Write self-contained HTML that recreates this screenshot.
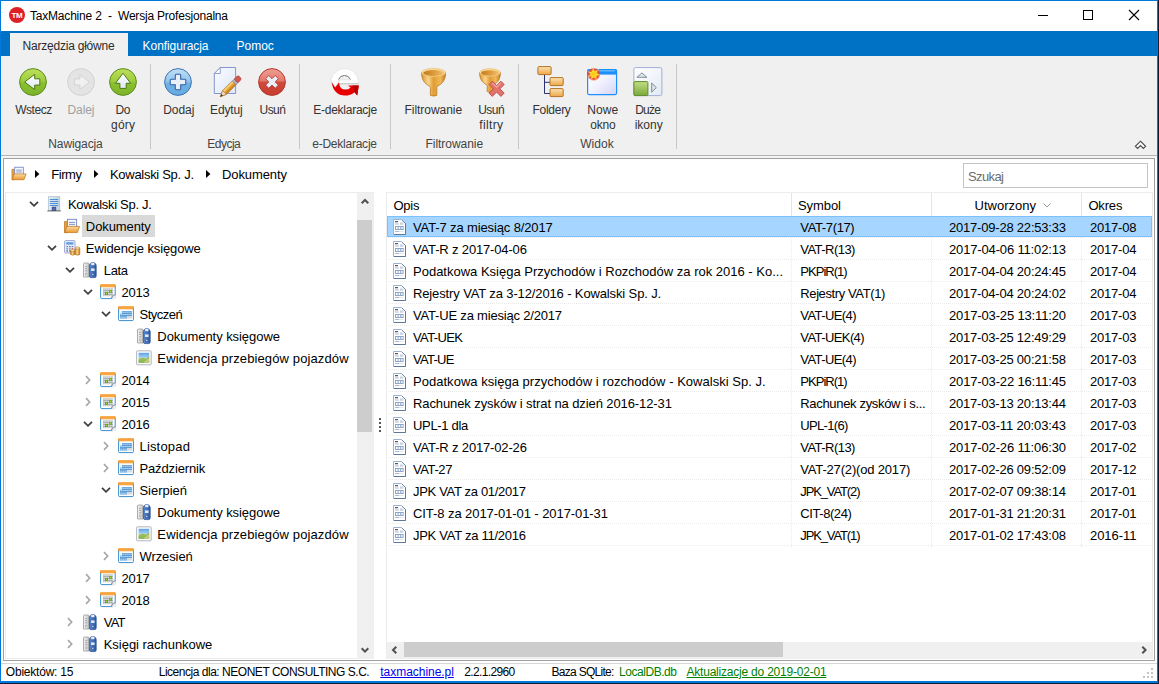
<!DOCTYPE html>
<html lang="pl"><head><meta charset="utf-8"><title>TaxMachine 2 - Wersja Profesjonalna</title>
<style>
html,body{margin:0;padding:0;background:#fff;}
body{width:1159px;height:684px;overflow:hidden;font-family:"Liberation Sans",sans-serif;}
#win{position:relative;width:1159px;height:684px;overflow:hidden;background:#fff;}
.t{position:absolute;white-space:pre;display:block;line-height:20px;}
.r{position:absolute;}
svg{position:absolute;overflow:visible;}
.dot{height:1px;background-image:linear-gradient(to right,#eaeaea 1px,transparent 1px);background-size:2px 1px;}
.vdot{width:1px;background-image:linear-gradient(to bottom,#eaeaea 1px,transparent 1px);background-size:1px 2px;}

</style></head>
<body>
<div id="win">
<svg width="0" height="0" style="left:0;top:0"><defs>
<linearGradient id="gGreen" x1="0" y1="0" x2="0" y2="1"><stop offset="0" stop-color="#bfe05e"/><stop offset=".5" stop-color="#9acb39"/><stop offset=".52" stop-color="#8bc02f"/><stop offset="1" stop-color="#7db32a"/></linearGradient>
<linearGradient id="gBlue" x1="0" y1="0" x2="0" y2="1"><stop offset="0" stop-color="#c2e0f4"/><stop offset=".5" stop-color="#8fc3ea"/><stop offset=".55" stop-color="#6fb0e3"/><stop offset="1" stop-color="#68abe0"/></linearGradient>
<linearGradient id="gRed" x1="0" y1="0" x2="0" y2="1"><stop offset="0" stop-color="#f0a094"/><stop offset=".45" stop-color="#e4796c"/><stop offset=".52" stop-color="#cf4a3c"/><stop offset="1" stop-color="#c73c2e"/></linearGradient>
<linearGradient id="gArr" x1="0" y1="0" x2="0" y2="1"><stop offset="0" stop-color="#ffffff"/><stop offset="1" stop-color="#dde9f3"/></linearGradient>
<linearGradient id="gDoc" x1="0" y1="0" x2="1" y2="1"><stop offset="0" stop-color="#fafcff"/><stop offset="1" stop-color="#dde6f6"/></linearGradient>
<linearGradient id="gGold" x1="0" y1="0" x2="1" y2="0"><stop offset="0" stop-color="#dc9530"/><stop offset=".28" stop-color="#f8d58c"/><stop offset=".5" stop-color="#e29c32"/><stop offset=".78" stop-color="#efb859"/><stop offset="1" stop-color="#c27c20"/></linearGradient>
<linearGradient id="gGoldIn" x1="0" y1="0" x2="1" y2="0"><stop offset="0" stop-color="#c07a22"/><stop offset=".5" stop-color="#de9a3a"/><stop offset="1" stop-color="#f0c070"/></linearGradient>
<linearGradient id="gBox" x1="0" y1="0" x2="0" y2="1"><stop offset="0" stop-color="#fbe3b5"/><stop offset="1" stop-color="#eea646"/></linearGradient>
<linearGradient id="gWin" x1="0" y1="0" x2="1" y2="1"><stop offset="0" stop-color="#ffffff"/><stop offset=".45" stop-color="#f4f4ff"/><stop offset="1" stop-color="#d3d3f7"/></linearGradient>
<radialGradient id="gStar"><stop offset="0" stop-color="#fff27a"/><stop offset=".45" stop-color="#ffc31e"/><stop offset=".7" stop-color="#f2542d"/><stop offset="1" stop-color="#e8392b" stop-opacity=".55"/></radialGradient>
<linearGradient id="gPane" x1="0" y1="0" x2="1" y2="1"><stop offset="0" stop-color="#ffffff"/><stop offset="1" stop-color="#e3eaf6"/></linearGradient>
<linearGradient id="gGsq" x1="0" y1="0" x2="0" y2="1"><stop offset="0" stop-color="#c3dd84"/><stop offset="1" stop-color="#79a93a"/></linearGradient>
<linearGradient id="gFold" x1="0" y1="0" x2="0" y2="1"><stop offset="0" stop-color="#fbdca6"/><stop offset="1" stop-color="#e9992f"/></linearGradient>
<linearGradient id="gBld" x1="0" y1="0" x2="1" y2="0"><stop offset="0" stop-color="#e6eef4"/><stop offset="1" stop-color="#c3d3e0"/></linearGradient>
<linearGradient id="gBinB" x1="0" y1="0" x2="1" y2="0"><stop offset="0" stop-color="#5b86c8"/><stop offset="1" stop-color="#2d5aa6"/></linearGradient>
<linearGradient id="gBinG" x1="0" y1="0" x2="1" y2="0"><stop offset="0" stop-color="#f4f4f4"/><stop offset="1" stop-color="#c9c9c9"/></linearGradient>
<linearGradient id="gSky" x1="0" y1="0" x2="0" y2="1"><stop offset="0" stop-color="#5da3e6"/><stop offset=".5" stop-color="#a9d3f2"/><stop offset=".55" stop-color="#b9cf7a"/><stop offset="1" stop-color="#7fae48"/></linearGradient>
<linearGradient id="gCoin" x1="0" y1="0" x2="1" y2="0"><stop offset="0" stop-color="#c77a1c"/><stop offset=".4" stop-color="#fbd88a"/><stop offset="1" stop-color="#c77a1c"/></linearGradient>


</defs></svg>
<div class="r" style="left:0px;top:0px;width:1159px;height:684px;background:#fff;"></div>
<div class="r" style="left:0px;top:31px;width:1159px;height:25px;background:#0072c6;"></div>
<div class="r" style="left:0px;top:56px;width:1159px;height:99px;background:#f0f0f0;"></div>
<div class="r" style="left:10px;top:33px;width:118px;height:23px;background:#f0f0f0;"></div>
<div class="r" style="left:0px;top:155px;width:1159px;height:1px;background:#b4b4b4;"></div>
<div class="r" style="left:0px;top:156px;width:1159px;height:2px;background:#f4f4f4;"></div>
<div class="r" style="left:3px;top:158px;width:1152px;height:503px;background:transparent;box-sizing:border-box;border:1px solid #a0a0a0;"></div>
<div class="r" style="left:0px;top:663px;width:1159px;height:1px;background:#d7d7d7;"></div>
<span class="t " style="left:30px;top:6px;font-size:12px;color:#000;letter-spacing:-0.200px;">TaxMachine 2  -  Wersja Profesjonalna</span>
<svg style="left:9px;top:7px" width="16" height="16" viewBox="0 0 16 16"><circle cx="8" cy="8" r="8" fill="#dc2026"/><text x="8" y="10.7" text-anchor="middle" font-family="Liberation Sans,sans-serif" font-weight="bold" font-size="8" fill="#fff" letter-spacing="-.3">TM</text></svg>
<div class="r" style="left:1038px;top:15px;width:10px;height:1px;background:#000;"></div>
<div class="r" style="left:1083px;top:10px;width:10px;height:10px;background:transparent;box-sizing:border-box;border:1px solid #000;"></div>
<svg style="left:1129px;top:10px" width="10" height="10" viewBox="0 0 10 10"><path d="M0 0 L10 10 M10 0 L0 10" stroke="#000" stroke-width="1.1" fill="none"/></svg>
<span class="t " style="left:22.6px;top:36px;font-size:12px;color:#2b2b2b;letter-spacing:-0.225px;">Narzędzia główne</span>
<span class="t " style="left:142.6px;top:36px;font-size:12px;color:#fff;letter-spacing:-0.073px;">Konfiguracja</span>
<span class="t " style="left:236.6px;top:36px;font-size:12px;color:#fff;letter-spacing:-0.037px;">Pomoc</span>
<span class="t " style="left:15.2px;top:100px;font-size:12px;color:#333;letter-spacing:-0.467px;">Wstecz</span>
<span class="t " style="left:67.5px;top:100px;font-size:12px;color:#a0a0a0;letter-spacing:-0.086px;">Dalej</span>
<span class="t " style="left:115.5px;top:100px;font-size:12px;color:#333;letter-spacing:-0.339px;">Do</span>
<span class="t " style="left:111px;top:115px;font-size:12px;color:#333;letter-spacing:0.219px;">góry</span>
<span class="t " style="left:48.25px;top:134px;font-size:12px;color:#444;letter-spacing:-0.107px;">Nawigacja</span>
<span class="t " style="left:163.3px;top:100px;font-size:12px;color:#333;letter-spacing:-0.088px;">Dodaj</span>
<span class="t " style="left:210.05px;top:100px;font-size:12px;color:#333;letter-spacing:-0.130px;">Edytuj</span>
<span class="t " style="left:259.55px;top:100px;font-size:12px;color:#333;letter-spacing:-0.571px;">Usuń</span>
<span class="t " style="left:207.3px;top:134px;font-size:12px;color:#444;letter-spacing:-0.523px;">Edycja</span>
<span class="t " style="left:313.3px;top:100px;font-size:12px;color:#333;letter-spacing:-0.263px;">E-deklaracje</span>
<span class="t " style="left:312.2px;top:134px;font-size:12px;color:#444;letter-spacing:-0.233px;">e-Deklaracje</span>
<span class="t " style="left:404.5px;top:100px;font-size:12px;color:#333;letter-spacing:-0.042px;">Filtrowanie</span>
<span class="t " style="left:478.25px;top:100px;font-size:12px;color:#333;letter-spacing:-0.571px;">Usuń</span>
<span class="t " style="left:479.3px;top:115px;font-size:12px;color:#333;letter-spacing:0.361px;">filtry</span>
<span class="t " style="left:425.5px;top:134px;font-size:12px;color:#444;letter-spacing:-0.042px;">Filtrowanie</span>
<span class="t " style="left:532.55px;top:100px;font-size:12px;color:#333;letter-spacing:-0.285px;">Foldery</span>
<span class="t " style="left:587.2px;top:100px;font-size:12px;color:#333;letter-spacing:0.107px;">Nowe</span>
<span class="t " style="left:590.15px;top:115px;font-size:12px;color:#333;letter-spacing:-0.173px;">okno</span>
<span class="t " style="left:635.2px;top:100px;font-size:12px;color:#333;letter-spacing:-0.737px;">Duże</span>
<span class="t " style="left:634.7px;top:115px;font-size:12px;color:#333;letter-spacing:-0.003px;">ikony</span>
<span class="t " style="left:580.15px;top:134px;font-size:12px;color:#444;letter-spacing:0.090px;">Widok</span>
<div class="r" style="left:150px;top:64px;width:1px;height:85px;background:#c8c8c8;"></div>
<div class="r" style="left:299px;top:64px;width:1px;height:85px;background:#c8c8c8;"></div>
<div class="r" style="left:390px;top:64px;width:1px;height:85px;background:#c8c8c8;"></div>
<div class="r" style="left:518px;top:64px;width:1px;height:85px;background:#c8c8c8;"></div>
<div class="r" style="left:676px;top:64px;width:1px;height:85px;background:#c8c8c8;"></div>
<svg style="left:19px;top:68px" width="28" height="28" viewBox="0 0 28 28"><circle cx="14" cy="14" r="13.4" fill="url(#gGreen)" stroke="#5c8d1b" stroke-width="1"/><path d="M5.7 14 L15.7 6.3 V10.8 H20.8 V17.1 H15.7 V21.6 Z" fill="url(#gArr)" stroke="#4a7812" stroke-width="1" stroke-linejoin="round"/></svg>
<svg style="left:67px;top:68px" width="28" height="28" viewBox="0 0 28 28"><circle cx="14" cy="14" r="13.4" fill="#e4e4e4" stroke="#d2d2d2" stroke-width="1"/><path d="M22.5 14 L12.9 6.6 V10.9 H7.6 V17 H12.9 V21.4 Z" fill="#f0f0f0" stroke="#d0d0d0" stroke-width=".9" stroke-linejoin="round"/></svg>
<svg style="left:109px;top:68px" width="28" height="28" viewBox="0 0 28 28"><circle cx="14" cy="14" r="13.4" fill="url(#gGreen)" stroke="#5c8d1b" stroke-width="1"/><path d="M14 5.2 L21.7 15.3 H17.2 V20.4 H10.9 V15.3 H6.4 Z" fill="url(#gArr)" stroke="#4a7812" stroke-width="1" stroke-linejoin="round"/></svg>
<svg style="left:164px;top:68px" width="28" height="28" viewBox="0 0 28 28"><circle cx="14" cy="14" r="13.4" fill="url(#gBlue)" stroke="#3d74b8" stroke-width="1"/><path d="M11.3 7.4 Q11.3 6.2 12.5 6.2 H15.5 Q16.7 6.2 16.7 7.4 V11.3 H20.6 Q21.8 11.3 21.8 12.5 V15.5 Q21.8 16.7 20.6 16.7 H16.7 V20.6 Q16.7 21.8 15.5 21.8 H12.5 Q11.3 21.8 11.3 20.6 V16.7 H7.4 Q6.2 16.7 6.2 15.5 V12.5 Q6.2 11.3 7.4 11.3 H11.3 Z" fill="#eaf0f9" stroke="#2f62ac" stroke-width="1.1"/></svg>
<svg style="left:213px;top:67px" width="30" height="31" viewBox="0 0 30 31"><path d="M7.3 .5 H22.6 V26.5 H1.3 V6.5 Z" fill="url(#gDoc)" stroke="#8595cf" stroke-width="1"/><path d="M7.3 .5 V6.5 H1.3 Z" fill="#fff" stroke="#8595cf" stroke-width=".9" stroke-linejoin="round"/>
<g transform="translate(7.3 29.7) rotate(-45)"><path d="M0 0 L6 -2.7 H19.6 V2.7 H6 Z" fill="#e9a233" stroke="#9a6a2a" stroke-width=".6"/><rect x="6" y="-2.4" width="13.6" height="1.7" fill="#f7cf7c"/><rect x="6" y="1" width="13.6" height="1.5" fill="#c9821f"/><rect x="19.6" y="-2.7" width="2.6" height="5.4" fill="#aab0c2" stroke="#7d8499" stroke-width=".4"/><path d="M22.2 -2.7 H25.6 Q27.8 -2.7 27.8 -.7 V.7 Q27.8 2.7 25.6 2.7 H22.2 Z" fill="#d2584e" stroke="#a03a32" stroke-width=".5"/><path d="M0 0 L6 -2.7 V2.7 Z" fill="#f1d3b8" stroke="#9a6a2a" stroke-width=".5"/><path d="M0 0 L2.6 -1.2 V1.2 Z" fill="#3a3a3a"/></g></svg>
<svg style="left:258px;top:68px" width="28" height="28" viewBox="0 0 28 28"><circle cx="14" cy="14" r="13.4" fill="url(#gRed)" stroke="#b53a2e" stroke-width="1"/><path d="M10.8 7.5 L14 10.7 L17.2 7.5 L20.4 10.7 L17.2 13.9 L20.4 17.1 L17.2 20.3 L14 17.1 L10.8 20.3 L7.6 17.1 L10.8 13.9 L7.6 10.7 Z" fill="#e9eff8" stroke="#b23a2e" stroke-width=".9" stroke-linejoin="round"/></svg>
<svg style="left:330px;top:67px" width="30" height="30" viewBox="0 0 30 30"><path d="M.3 12.2 L5.2 19.6 L9.6 13 H8.2 A6.6 6.6 0 0 1 20.6 13 H9 V16.6 H28.6 V15 A13.9 13.9 0 0 0 1.2 12.2 Z" fill="#ffffff" stroke="#dcdcdc" stroke-width=".6"/><path d="M8.6 12.4 A6.4 6.4 0 0 1 20.4 12.4" fill="none" stroke="#7d7d7d" stroke-width="1"/><path d="M9.2 16.8 H28.6" stroke="#b9b9b9" stroke-width=".8"/>
<path d="M1.6 15.2 L5.2 20.4 L9 15.4 Q9.6 22.6 15.4 22.6 Q18.6 22.6 20.6 20.4 L18 18.6 H28.8 L27.2 28.6 L24.6 25.2 Q20.6 28.6 15 28.6 Q3.6 28.2 1.6 15.2 Z" fill="#e60000"/><path d="M22.4 18.6 H28.8 L27.2 28.6 L24.6 25.2 Z" fill="#b80000"/></svg>
<svg style="left:420.5px;top:67.5px" width="26" height="30" viewBox="0 0 26 30"><path d="M.6 4.6 C.6 11.5 3.4 15.6 8.2 17.8 Q9.4 18.4 9.4 19.6 V27.4 Q12.6 28.8 15.8 27.4 V19.6 Q15.8 18.4 17 17.8 C21.8 15.6 24.6 11.5 24.6 4.6 Z" fill="url(#gGold)" stroke="#b97a26" stroke-width=".8"/><ellipse cx="12.6" cy="4.6" rx="12" ry="4.1" fill="#f8dc9c" stroke="#eab55a" stroke-width=".6"/><ellipse cx="12.6" cy="5" rx="10.4" ry="2.9" fill="url(#gGoldIn)"/></svg>
<svg style="left:479px;top:67.5px" width="28" height="30" viewBox="0 0 28 30"><path d="M.6 4.6 C.6 10.8 3 14.6 7.2 16.4 Q8.2 17 8.2 18.2 V23.6 Q11 25 13.8 23.6 V18.2 Q13.8 17 14.8 16.4 C19 14.6 21.4 10.8 21.4 4.6 Z" fill="url(#gGold)" stroke="#b97a26" stroke-width=".8"/><ellipse cx="11" cy="4.6" rx="10.4" ry="3.9" fill="#f8dc9c" stroke="#eab55a" stroke-width=".6"/><ellipse cx="11" cy="5" rx="8.9" ry="2.7" fill="url(#gGoldIn)"/>
<path d="M13.3 13.2 L17.6 17.5 L21.9 13.2 L25.2 16.5 L20.9 20.8 L25.2 25.1 L21.9 28.4 L17.6 24.1 L13.3 28.4 L10 25.1 L14.3 20.8 L10 16.5 Z" fill="#e0736b" stroke="#c2483f" stroke-width=".9" stroke-linejoin="round"/><path d="M13.3 14.8 L17.6 19.1 L21.9 14.8" fill="none" stroke="#f0a9a2" stroke-width="1.2"/></svg>
<svg style="left:537px;top:65.5px" width="28" height="32" viewBox="0 0 28 32"><path d="M7.5 9 V27.5 H13 M7.5 16.3 H13" fill="none" stroke="#2c306e" stroke-width="1"/><rect x=".9" y=".6" width="13.2" height="8" rx="1" fill="url(#gBox)" stroke="#b57226"/><rect x="13" y="11.6" width="13.2" height="8" rx="1" fill="url(#gBox)" stroke="#b57226"/><rect x="13" y="22.6" width="13.2" height="8" rx="1" fill="url(#gBox)" stroke="#b57226"/></svg>
<svg style="left:583px;top:65px" width="34" height="30" viewBox="0 0 34 30"><rect x="4.6" y="4.6" width="29" height="25" rx="1.5" fill="url(#gWin)" stroke="#1e8fff" stroke-width="1.2"/><rect x="4.6" y="4.6" width="29" height="5" fill="#1e8fff"/><rect x="6" y="5.2" width="26" height="1.2" fill="#6fc0ff"/><circle cx="10.8" cy="9.2" r="6.3" fill="url(#gStar)"/><path d="M10.2 1.6 L11.4 7 L16.4 3.6 L12.9 8.2 L18 10 L12.8 10.4 L14 16 L10.9 11.6 L7.6 15.4 L9 10.8 L3.6 12 L8.2 9.2 L3.8 6 L9 7.4 Z" fill="#ffe14a" opacity=".9"/><circle cx="10.8" cy="9.2" r="2.6" fill="#ffcf1a"/></svg>
<svg style="left:632.5px;top:66.5px" width="30" height="30" viewBox="0 0 30 30"><rect x=".9" y=".6" width="28" height="28" rx="1.5" fill="url(#gPane)" stroke="#9fb0d3"/><rect x=".9" y="14.6" width="14" height="14" rx="1" fill="url(#gGsq)" stroke="#5f8d2c"/><path d="M3.9 10.3 L8.9 5.9 L13.9 10.3 Z" fill="#dfe6ea" stroke="#73828c" stroke-width=".9" stroke-linejoin="round"/><path d="M18.7 16 V25.2 L23.3 20.6 Z" fill="#dfe6ea" stroke="#73828c" stroke-width=".9" stroke-linejoin="round"/></svg>
<svg style="left:1134px;top:140px" width="13" height="10" viewBox="0 0 13 10"><path d="M6.5 1.2 L11.6 6.3 L9.4 8.5 L6.5 5.6 L3.6 8.5 L1.4 6.3 Z" fill="#fff" stroke="#4a4a4a" stroke-width="1.15" stroke-linejoin="miter"/></svg>
<svg style="left:11px;top:165.5px" width="16" height="15" viewBox="0 0 16 16"><path d="M.5 3.6 H3.4 V14.6 H.5 Z" fill="#e9a03a" stroke="#c27a22" stroke-width=".8"/><rect x="3.4" y="1.3" width="9.2" height="9" fill="#f7f9fd" stroke="#7585c4" stroke-width=".9"/><path d="M5 4.4 H11 M5 6.4 H11" stroke="#7f92c9" stroke-width="1"/><path d="M.7 14.6 L2.9 8.4 H15.6 L13.3 14.6 Z" fill="url(#gFold)" stroke="#c27a22" stroke-width=".8" stroke-linejoin="round"/></svg>
<svg style="left:35px;top:169.5px" width="5" height="8" viewBox="0 0 5 8"><path d="M0 0 L4.4 4 L0 8 Z" fill="#000"/></svg>
<svg style="left:94px;top:169.5px" width="5" height="8" viewBox="0 0 5 8"><path d="M0 0 L4.4 4 L0 8 Z" fill="#000"/></svg>
<svg style="left:206px;top:169.5px" width="5" height="8" viewBox="0 0 5 8"><path d="M0 0 L4.4 4 L0 8 Z" fill="#000"/></svg>
<span class="t " style="left:51.3px;top:165px;font-size:13px;color:#000;letter-spacing:-0.447px;">Firmy</span>
<span class="t " style="left:110px;top:165px;font-size:13px;color:#000;letter-spacing:-0.296px;">Kowalski Sp. J.</span>
<span class="t " style="left:222px;top:165px;font-size:13px;color:#000;letter-spacing:-0.094px;">Dokumenty</span>
<div class="r" style="left:963px;top:163px;width:185px;height:25px;background:#fff;box-sizing:border-box;border:1px solid #c4c4c4;"></div>
<span class="t " style="left:968px;top:167px;font-size:13px;color:#6d6d6d;letter-spacing:-0.603px;">Szukaj</span>
<div class="r" style="left:5px;top:192px;width:369px;height:467px;background:#fff;box-sizing:border-box;border:1px solid #ececec;border-right:none;"></div>
<div class="r" style="left:357px;top:193px;width:17px;height:466px;background:#f0f0f0;"></div>
<div class="r" style="left:357px;top:220px;width:15px;height:212px;background:#cdcdcd;"></div>
<svg style="left:360.6px;top:198px" width="8" height="7" viewBox="0 0 8 7"><path d="M.7 5.3 L4 2 L7.3 5.3" fill="none" stroke="#505050" stroke-width="2"/></svg>
<svg style="left:360.6px;top:646.5px" width="8" height="7" viewBox="0 0 8 7"><path d="M.7 1.3 L4 4.6 L7.3 1.3" fill="none" stroke="#505050" stroke-width="2"/></svg>
<div class="r" style="left:379px;top:418px;width:2px;height:2px;background:#555;"></div>
<div class="r" style="left:379px;top:422px;width:2px;height:2px;background:#555;"></div>
<div class="r" style="left:379px;top:426px;width:2px;height:2px;background:#555;"></div>
<div class="r" style="left:379px;top:430px;width:2px;height:2px;background:#555;"></div>
<span class="t " style="left:68px;top:195px;font-size:13px;color:#000;letter-spacing:-0.310px;">Kowalski Sp. J.</span>
<svg style="left:46px;top:196px" width="16" height="16" viewBox="0 0 16 16"><rect x="2.3" y=".7" width="11.5" height="14" fill="url(#gBld)" stroke="#a9bccb" stroke-width=".7"/><path d="M3.8 3.5 H12.2 M3.8 5.5 H12.2 M3.8 7.5 H12.2 M3.8 9.5 H12.2" stroke="#4a8fd8" stroke-width="1"/><rect x="6.2" y="11.2" width="3.6" height="3.4" fill="#5a6aa8" stroke="#36468a" stroke-width=".8"/><path d="M1.4 14.9 H14.8" stroke="#4f5760" stroke-width=".9"/></svg>
<svg style="left:28.5px;top:201px" width="10" height="6" viewBox="0 0 10 6"><path d="M1 .9 L5 4.8 L9 .9" fill="none" stroke="#404040" stroke-width="1.8"/></svg>
<div class="r" style="left:82px;top:215px;width:73px;height:22px;background:#d9d9d9;"></div>
<span class="t " style="left:85.87px;top:217px;font-size:13px;color:#000;letter-spacing:-0.106px;">Dokumenty</span>
<svg style="left:64px;top:218px" width="16" height="16" viewBox="0 0 16 16"><path d="M.5 3.6 H3.4 V14.6 H.5 Z" fill="#e9a03a" stroke="#c27a22" stroke-width=".8"/><rect x="3.4" y="1.3" width="9.2" height="9" fill="#f7f9fd" stroke="#7585c4" stroke-width=".9"/><path d="M5 4.4 H11 M5 6.4 H11" stroke="#7f92c9" stroke-width="1"/><path d="M.7 14.6 L2.9 8.4 H15.6 L13.3 14.6 Z" fill="url(#gFold)" stroke="#c27a22" stroke-width=".8" stroke-linejoin="round"/></svg>
<span class="t " style="left:85.87px;top:239px;font-size:13px;color:#000;letter-spacing:-0.127px;">Ewidencje księgowe</span>
<svg style="left:63.5px;top:240px" width="17" height="16" viewBox="0 0 17 16"><rect x=".6" y=".6" width="10.4" height="12.4" rx="1" fill="#e8eef8" stroke="#8796c6" stroke-width=".8"/><rect x="2.2" y="2.2" width="7.2" height="2.4" fill="#5f9ee0"/><path d="M2.4 6.6 H4 M5 6.6 H6.6 M7.6 6.6 H9.2 M2.4 8.8 H4 M5 8.8 H6.6 M2.4 11 H4 M5 11 H6.6" stroke="#6f7fb5" stroke-width="1.3"/><path d="M7.6 8.8 H9.2" stroke="#d64d43" stroke-width="1.3"/>
<path d="M6.6 10.6 V14.4 Q8.6 16 10.8 14.4 V10.6 Z" fill="url(#gCoin)" stroke="#b06a12" stroke-width=".6"/><ellipse cx="8.7" cy="10.6" rx="2.1" ry="1.1" fill="#fbe0a0" stroke="#b06a12" stroke-width=".5"/><path d="M11.2 8 V14.4 Q13.4 16 15.8 14.4 V8 Z" fill="url(#gCoin)" stroke="#b06a12" stroke-width=".6"/><ellipse cx="13.5" cy="8" rx="2.3" ry="1.2" fill="#fbe0a0" stroke="#b06a12" stroke-width=".5"/></svg>
<svg style="left:46.5px;top:245px" width="10" height="6" viewBox="0 0 10 6"><path d="M1 .9 L5 4.8 L9 .9" fill="none" stroke="#404040" stroke-width="1.8"/></svg>
<span class="t " style="left:103.74px;top:261px;font-size:13px;color:#000;letter-spacing:-0.334px;">Lata</span>
<svg style="left:82px;top:262px" width="16" height="16" viewBox="0 0 16 16"><path d="M1.5 2 Q1.5 1 2.5 1 H6 Q7 1 7 2 V15 H1.5 Z" fill="url(#gBinG)" stroke="#9a9a9a" stroke-width=".8"/><path d="M3 4.4 H5.4 M3 6.6 H5.4 M3 8.8 H5.4" stroke="#9a9a9a" stroke-width=".8"/><circle cx="4.2" cy="12" r="1" fill="#fff" stroke="#8a8a8a" stroke-width=".6"/><path d="M7.4 3.4 Q7.4 2 8.6 1.4 L9.4 .5 H12.2 L13 1.4 Q14.2 2 14.2 3.4 V14 Q14.2 15.6 12.6 15.6 H9 Q7.4 15.6 7.4 14 Z" fill="url(#gBinB)" stroke="#234a8e" stroke-width=".7"/><rect x="9.2" y=".6" width="3.2" height="2.6" fill="#e9eef7"/><rect x="9" y="6.4" width="3.6" height="2.6" fill="#dbe6f6"/><circle cx="10.8" cy="12.4" r="1.1" fill="#c9d9f0" stroke="#1e3f7c" stroke-width=".5"/></svg>
<svg style="left:64.5px;top:267px" width="10" height="6" viewBox="0 0 10 6"><path d="M1 .9 L5 4.8 L9 .9" fill="none" stroke="#404040" stroke-width="1.8"/></svg>
<span class="t " style="left:121.61px;top:283px;font-size:13px;color:#000;letter-spacing:-0.240px;">2013</span>
<svg style="left:100px;top:284px" width="16" height="16" viewBox="0 0 16 16"><path d="M.6 2 H15.2 V13.4 Q15.2 14.6 14 14.6 H1.8 Q.6 14.6 .6 13.4 Z" fill="#fdfefe" stroke="#3a8fd0" stroke-width="1"/><rect x=".1" y=".2" width="15.6" height="3" rx=".6" fill="#f7941d"/><rect x="1.2" y="1.7" width="13.4" height=".7" fill="#fbc887"/><rect x="3" y="4.5" width="10" height="7.6" fill="#a9acb0"/><path d="M3.6 5.6 H13 M3.6 7.6 H13 M3.6 9.6 H13 M3.6 11.4 H13" stroke="#fff" stroke-width="1" stroke-dasharray="1 1"/><rect x="5" y="8" width="3" height="3" fill="#6aa81a"/><rect x="9" y="6" width="3" height="3" fill="#76b222"/><rect x="6" y="9" width="1" height="1" fill="#b5dc6a"/><rect x="10" y="7" width="1" height="1" fill="#b5dc6a"/><path d="M10.6 15 H15.7 V9.9 Z" fill="#c9ced6"/><path d="M10.6 15 Q11.2 10.8 15.7 9.9 V11 Q12.4 11.6 12 15 Z" fill="#8a94a2"/><path d="M12.4 15 Q12.6 12.2 15.7 11.6 V15 Z" fill="#eef1f5"/></svg>
<svg style="left:82.5px;top:289px" width="10" height="6" viewBox="0 0 10 6"><path d="M1 .9 L5 4.8 L9 .9" fill="none" stroke="#404040" stroke-width="1.8"/></svg>
<span class="t " style="left:139.48px;top:305px;font-size:13px;color:#000;letter-spacing:-0.507px;">Styczeń</span>
<svg style="left:118px;top:306px" width="16" height="16" viewBox="0 0 16 16"><path d="M.6 2 H15.4 V13.6 Q15.4 14.6 14.2 14.6 H1.8 Q.6 14.6 .6 13.6 Z" fill="#fdfefe" stroke="#3a8fd0" stroke-width="1"/><rect x=".1" y=".2" width="15.8" height="3" rx=".6" fill="#f7941d"/><rect x="1.2" y="1.7" width="13.6" height=".7" fill="#fbc887"/><path d="M4 5 H14 V10 H9 V12.4 H2 V7.4 H4 Z" fill="#5b9bd5"/><path d="M2 10 H9 V12.4 H14 V12.4" fill="none"/><rect x="9" y="10.2" width="5" height="2.2" fill="#c5cbd3"/><path d="M2.6 6.2 H14 M2.6 8.6 H14 M2.6 11.2 H14" stroke="#fff" stroke-width="1" stroke-dasharray="1 1"/><rect x="2" y="5" width="2" height="2.3" fill="#e9f3fb"/></svg>
<svg style="left:100.5px;top:311px" width="10" height="6" viewBox="0 0 10 6"><path d="M1 .9 L5 4.8 L9 .9" fill="none" stroke="#404040" stroke-width="1.8"/></svg>
<span class="t " style="left:157.35px;top:327px;font-size:13px;color:#000;letter-spacing:-0.056px;">Dokumenty księgowe</span>
<svg style="left:136px;top:328px" width="16" height="16" viewBox="0 0 16 16"><path d="M1.5 2 Q1.5 1 2.5 1 H6 Q7 1 7 2 V15 H1.5 Z" fill="url(#gBinG)" stroke="#9a9a9a" stroke-width=".8"/><path d="M3 4.4 H5.4 M3 6.6 H5.4 M3 8.8 H5.4" stroke="#9a9a9a" stroke-width=".8"/><circle cx="4.2" cy="12" r="1" fill="#fff" stroke="#8a8a8a" stroke-width=".6"/><path d="M7.4 3.4 Q7.4 2 8.6 1.4 L9.4 .5 H12.2 L13 1.4 Q14.2 2 14.2 3.4 V14 Q14.2 15.6 12.6 15.6 H9 Q7.4 15.6 7.4 14 Z" fill="url(#gBinB)" stroke="#234a8e" stroke-width=".7"/><rect x="9.2" y=".6" width="3.2" height="2.6" fill="#e9eef7"/><rect x="9" y="6.4" width="3.6" height="2.6" fill="#dbe6f6"/><circle cx="10.8" cy="12.4" r="1.1" fill="#c9d9f0" stroke="#1e3f7c" stroke-width=".5"/></svg>
<span class="t " style="left:157.35px;top:349px;font-size:13px;color:#000;letter-spacing:0.118px;">Ewidencja przebiegów pojazdów</span>
<svg style="left:136px;top:350px" width="16" height="16" viewBox="0 0 16 16"><rect x=".6" y=".8" width="14.6" height="14" rx=".8" fill="#fbfbfc" stroke="#a9aeb8" stroke-width=".9"/><rect x="2.6" y="2.8" width="10.6" height="10" fill="url(#gSky)"/><path d="M2.6 10.6 L6.8 7.4 L9.4 9.4 L13.2 5.6 V12.8 H2.6 Z" fill="#8ab85a" opacity=".75"/><path d="M7.4 12.8 L13.2 7.4 V12.8 Z" fill="#d9d38a" opacity=".7"/></svg>
<span class="t " style="left:121.61px;top:371px;font-size:13px;color:#000;letter-spacing:-0.240px;">2014</span>
<svg style="left:100px;top:372px" width="16" height="16" viewBox="0 0 16 16"><path d="M.6 2 H15.2 V13.4 Q15.2 14.6 14 14.6 H1.8 Q.6 14.6 .6 13.4 Z" fill="#fdfefe" stroke="#3a8fd0" stroke-width="1"/><rect x=".1" y=".2" width="15.6" height="3" rx=".6" fill="#f7941d"/><rect x="1.2" y="1.7" width="13.4" height=".7" fill="#fbc887"/><rect x="3" y="4.5" width="10" height="7.6" fill="#a9acb0"/><path d="M3.6 5.6 H13 M3.6 7.6 H13 M3.6 9.6 H13 M3.6 11.4 H13" stroke="#fff" stroke-width="1" stroke-dasharray="1 1"/><rect x="5" y="8" width="3" height="3" fill="#6aa81a"/><rect x="9" y="6" width="3" height="3" fill="#76b222"/><rect x="6" y="9" width="1" height="1" fill="#b5dc6a"/><rect x="10" y="7" width="1" height="1" fill="#b5dc6a"/><path d="M10.6 15 H15.7 V9.9 Z" fill="#c9ced6"/><path d="M10.6 15 Q11.2 10.8 15.7 9.9 V11 Q12.4 11.6 12 15 Z" fill="#8a94a2"/><path d="M12.4 15 Q12.6 12.2 15.7 11.6 V15 Z" fill="#eef1f5"/></svg>
<svg style="left:85.3px;top:375.4px" width="6" height="10" viewBox="0 0 6 10"><path d="M1 1.1 L4.7 5 L1 8.9" fill="none" stroke="#a6a6a6" stroke-width="1.6"/></svg>
<span class="t " style="left:121.61px;top:393px;font-size:13px;color:#000;letter-spacing:-0.240px;">2015</span>
<svg style="left:100px;top:394px" width="16" height="16" viewBox="0 0 16 16"><path d="M.6 2 H15.2 V13.4 Q15.2 14.6 14 14.6 H1.8 Q.6 14.6 .6 13.4 Z" fill="#fdfefe" stroke="#3a8fd0" stroke-width="1"/><rect x=".1" y=".2" width="15.6" height="3" rx=".6" fill="#f7941d"/><rect x="1.2" y="1.7" width="13.4" height=".7" fill="#fbc887"/><rect x="3" y="4.5" width="10" height="7.6" fill="#a9acb0"/><path d="M3.6 5.6 H13 M3.6 7.6 H13 M3.6 9.6 H13 M3.6 11.4 H13" stroke="#fff" stroke-width="1" stroke-dasharray="1 1"/><rect x="5" y="8" width="3" height="3" fill="#6aa81a"/><rect x="9" y="6" width="3" height="3" fill="#76b222"/><rect x="6" y="9" width="1" height="1" fill="#b5dc6a"/><rect x="10" y="7" width="1" height="1" fill="#b5dc6a"/><path d="M10.6 15 H15.7 V9.9 Z" fill="#c9ced6"/><path d="M10.6 15 Q11.2 10.8 15.7 9.9 V11 Q12.4 11.6 12 15 Z" fill="#8a94a2"/><path d="M12.4 15 Q12.6 12.2 15.7 11.6 V15 Z" fill="#eef1f5"/></svg>
<svg style="left:85.3px;top:397.4px" width="6" height="10" viewBox="0 0 6 10"><path d="M1 1.1 L4.7 5 L1 8.9" fill="none" stroke="#a6a6a6" stroke-width="1.6"/></svg>
<span class="t " style="left:121.61px;top:415px;font-size:13px;color:#000;letter-spacing:-0.240px;">2016</span>
<svg style="left:100px;top:416px" width="16" height="16" viewBox="0 0 16 16"><path d="M.6 2 H15.2 V13.4 Q15.2 14.6 14 14.6 H1.8 Q.6 14.6 .6 13.4 Z" fill="#fdfefe" stroke="#3a8fd0" stroke-width="1"/><rect x=".1" y=".2" width="15.6" height="3" rx=".6" fill="#f7941d"/><rect x="1.2" y="1.7" width="13.4" height=".7" fill="#fbc887"/><rect x="3" y="4.5" width="10" height="7.6" fill="#a9acb0"/><path d="M3.6 5.6 H13 M3.6 7.6 H13 M3.6 9.6 H13 M3.6 11.4 H13" stroke="#fff" stroke-width="1" stroke-dasharray="1 1"/><rect x="5" y="8" width="3" height="3" fill="#6aa81a"/><rect x="9" y="6" width="3" height="3" fill="#76b222"/><rect x="6" y="9" width="1" height="1" fill="#b5dc6a"/><rect x="10" y="7" width="1" height="1" fill="#b5dc6a"/><path d="M10.6 15 H15.7 V9.9 Z" fill="#c9ced6"/><path d="M10.6 15 Q11.2 10.8 15.7 9.9 V11 Q12.4 11.6 12 15 Z" fill="#8a94a2"/><path d="M12.4 15 Q12.6 12.2 15.7 11.6 V15 Z" fill="#eef1f5"/></svg>
<svg style="left:82.5px;top:421px" width="10" height="6" viewBox="0 0 10 6"><path d="M1 .9 L5 4.8 L9 .9" fill="none" stroke="#404040" stroke-width="1.8"/></svg>
<span class="t " style="left:139.48px;top:437px;font-size:13px;color:#000;letter-spacing:0.179px;">Listopad</span>
<svg style="left:118px;top:438px" width="16" height="16" viewBox="0 0 16 16"><path d="M.6 2 H15.4 V13.6 Q15.4 14.6 14.2 14.6 H1.8 Q.6 14.6 .6 13.6 Z" fill="#fdfefe" stroke="#3a8fd0" stroke-width="1"/><rect x=".1" y=".2" width="15.8" height="3" rx=".6" fill="#f7941d"/><rect x="1.2" y="1.7" width="13.6" height=".7" fill="#fbc887"/><path d="M4 5 H14 V10 H9 V12.4 H2 V7.4 H4 Z" fill="#5b9bd5"/><path d="M2 10 H9 V12.4 H14 V12.4" fill="none"/><rect x="9" y="10.2" width="5" height="2.2" fill="#c5cbd3"/><path d="M2.6 6.2 H14 M2.6 8.6 H14 M2.6 11.2 H14" stroke="#fff" stroke-width="1" stroke-dasharray="1 1"/><rect x="2" y="5" width="2" height="2.3" fill="#e9f3fb"/></svg>
<svg style="left:103.3px;top:441.4px" width="6" height="10" viewBox="0 0 6 10"><path d="M1 1.1 L4.7 5 L1 8.9" fill="none" stroke="#a6a6a6" stroke-width="1.6"/></svg>
<span class="t " style="left:139.48px;top:459px;font-size:13px;color:#000;letter-spacing:-0.139px;">Październik</span>
<svg style="left:118px;top:460px" width="16" height="16" viewBox="0 0 16 16"><path d="M.6 2 H15.4 V13.6 Q15.4 14.6 14.2 14.6 H1.8 Q.6 14.6 .6 13.6 Z" fill="#fdfefe" stroke="#3a8fd0" stroke-width="1"/><rect x=".1" y=".2" width="15.8" height="3" rx=".6" fill="#f7941d"/><rect x="1.2" y="1.7" width="13.6" height=".7" fill="#fbc887"/><path d="M4 5 H14 V10 H9 V12.4 H2 V7.4 H4 Z" fill="#5b9bd5"/><path d="M2 10 H9 V12.4 H14 V12.4" fill="none"/><rect x="9" y="10.2" width="5" height="2.2" fill="#c5cbd3"/><path d="M2.6 6.2 H14 M2.6 8.6 H14 M2.6 11.2 H14" stroke="#fff" stroke-width="1" stroke-dasharray="1 1"/><rect x="2" y="5" width="2" height="2.3" fill="#e9f3fb"/></svg>
<svg style="left:103.3px;top:463.4px" width="6" height="10" viewBox="0 0 6 10"><path d="M1 1.1 L4.7 5 L1 8.9" fill="none" stroke="#a6a6a6" stroke-width="1.6"/></svg>
<span class="t " style="left:139.48px;top:481px;font-size:13px;color:#000;letter-spacing:-0.028px;">Sierpień</span>
<svg style="left:118px;top:482px" width="16" height="16" viewBox="0 0 16 16"><path d="M.6 2 H15.4 V13.6 Q15.4 14.6 14.2 14.6 H1.8 Q.6 14.6 .6 13.6 Z" fill="#fdfefe" stroke="#3a8fd0" stroke-width="1"/><rect x=".1" y=".2" width="15.8" height="3" rx=".6" fill="#f7941d"/><rect x="1.2" y="1.7" width="13.6" height=".7" fill="#fbc887"/><path d="M4 5 H14 V10 H9 V12.4 H2 V7.4 H4 Z" fill="#5b9bd5"/><path d="M2 10 H9 V12.4 H14 V12.4" fill="none"/><rect x="9" y="10.2" width="5" height="2.2" fill="#c5cbd3"/><path d="M2.6 6.2 H14 M2.6 8.6 H14 M2.6 11.2 H14" stroke="#fff" stroke-width="1" stroke-dasharray="1 1"/><rect x="2" y="5" width="2" height="2.3" fill="#e9f3fb"/></svg>
<svg style="left:100.5px;top:487px" width="10" height="6" viewBox="0 0 10 6"><path d="M1 .9 L5 4.8 L9 .9" fill="none" stroke="#404040" stroke-width="1.8"/></svg>
<span class="t " style="left:157.35px;top:503px;font-size:13px;color:#000;letter-spacing:-0.056px;">Dokumenty księgowe</span>
<svg style="left:136px;top:504px" width="16" height="16" viewBox="0 0 16 16"><path d="M1.5 2 Q1.5 1 2.5 1 H6 Q7 1 7 2 V15 H1.5 Z" fill="url(#gBinG)" stroke="#9a9a9a" stroke-width=".8"/><path d="M3 4.4 H5.4 M3 6.6 H5.4 M3 8.8 H5.4" stroke="#9a9a9a" stroke-width=".8"/><circle cx="4.2" cy="12" r="1" fill="#fff" stroke="#8a8a8a" stroke-width=".6"/><path d="M7.4 3.4 Q7.4 2 8.6 1.4 L9.4 .5 H12.2 L13 1.4 Q14.2 2 14.2 3.4 V14 Q14.2 15.6 12.6 15.6 H9 Q7.4 15.6 7.4 14 Z" fill="url(#gBinB)" stroke="#234a8e" stroke-width=".7"/><rect x="9.2" y=".6" width="3.2" height="2.6" fill="#e9eef7"/><rect x="9" y="6.4" width="3.6" height="2.6" fill="#dbe6f6"/><circle cx="10.8" cy="12.4" r="1.1" fill="#c9d9f0" stroke="#1e3f7c" stroke-width=".5"/></svg>
<span class="t " style="left:157.35px;top:525px;font-size:13px;color:#000;letter-spacing:0.118px;">Ewidencja przebiegów pojazdów</span>
<svg style="left:136px;top:526px" width="16" height="16" viewBox="0 0 16 16"><rect x=".6" y=".8" width="14.6" height="14" rx=".8" fill="#fbfbfc" stroke="#a9aeb8" stroke-width=".9"/><rect x="2.6" y="2.8" width="10.6" height="10" fill="url(#gSky)"/><path d="M2.6 10.6 L6.8 7.4 L9.4 9.4 L13.2 5.6 V12.8 H2.6 Z" fill="#8ab85a" opacity=".75"/><path d="M7.4 12.8 L13.2 7.4 V12.8 Z" fill="#d9d38a" opacity=".7"/></svg>
<span class="t " style="left:139.48px;top:547px;font-size:13px;color:#000;letter-spacing:-0.092px;">Wrzesień</span>
<svg style="left:118px;top:548px" width="16" height="16" viewBox="0 0 16 16"><path d="M.6 2 H15.4 V13.6 Q15.4 14.6 14.2 14.6 H1.8 Q.6 14.6 .6 13.6 Z" fill="#fdfefe" stroke="#3a8fd0" stroke-width="1"/><rect x=".1" y=".2" width="15.8" height="3" rx=".6" fill="#f7941d"/><rect x="1.2" y="1.7" width="13.6" height=".7" fill="#fbc887"/><path d="M4 5 H14 V10 H9 V12.4 H2 V7.4 H4 Z" fill="#5b9bd5"/><path d="M2 10 H9 V12.4 H14 V12.4" fill="none"/><rect x="9" y="10.2" width="5" height="2.2" fill="#c5cbd3"/><path d="M2.6 6.2 H14 M2.6 8.6 H14 M2.6 11.2 H14" stroke="#fff" stroke-width="1" stroke-dasharray="1 1"/><rect x="2" y="5" width="2" height="2.3" fill="#e9f3fb"/></svg>
<svg style="left:103.3px;top:551.4px" width="6" height="10" viewBox="0 0 6 10"><path d="M1 1.1 L4.7 5 L1 8.9" fill="none" stroke="#a6a6a6" stroke-width="1.6"/></svg>
<span class="t " style="left:121.61px;top:569px;font-size:13px;color:#000;letter-spacing:-0.240px;">2017</span>
<svg style="left:100px;top:570px" width="16" height="16" viewBox="0 0 16 16"><path d="M.6 2 H15.2 V13.4 Q15.2 14.6 14 14.6 H1.8 Q.6 14.6 .6 13.4 Z" fill="#fdfefe" stroke="#3a8fd0" stroke-width="1"/><rect x=".1" y=".2" width="15.6" height="3" rx=".6" fill="#f7941d"/><rect x="1.2" y="1.7" width="13.4" height=".7" fill="#fbc887"/><rect x="3" y="4.5" width="10" height="7.6" fill="#a9acb0"/><path d="M3.6 5.6 H13 M3.6 7.6 H13 M3.6 9.6 H13 M3.6 11.4 H13" stroke="#fff" stroke-width="1" stroke-dasharray="1 1"/><rect x="5" y="8" width="3" height="3" fill="#6aa81a"/><rect x="9" y="6" width="3" height="3" fill="#76b222"/><rect x="6" y="9" width="1" height="1" fill="#b5dc6a"/><rect x="10" y="7" width="1" height="1" fill="#b5dc6a"/><path d="M10.6 15 H15.7 V9.9 Z" fill="#c9ced6"/><path d="M10.6 15 Q11.2 10.8 15.7 9.9 V11 Q12.4 11.6 12 15 Z" fill="#8a94a2"/><path d="M12.4 15 Q12.6 12.2 15.7 11.6 V15 Z" fill="#eef1f5"/></svg>
<svg style="left:85.3px;top:573.4px" width="6" height="10" viewBox="0 0 6 10"><path d="M1 1.1 L4.7 5 L1 8.9" fill="none" stroke="#a6a6a6" stroke-width="1.6"/></svg>
<span class="t " style="left:121.61px;top:591px;font-size:13px;color:#000;letter-spacing:-0.240px;">2018</span>
<svg style="left:100px;top:592px" width="16" height="16" viewBox="0 0 16 16"><path d="M.6 2 H15.2 V13.4 Q15.2 14.6 14 14.6 H1.8 Q.6 14.6 .6 13.4 Z" fill="#fdfefe" stroke="#3a8fd0" stroke-width="1"/><rect x=".1" y=".2" width="15.6" height="3" rx=".6" fill="#f7941d"/><rect x="1.2" y="1.7" width="13.4" height=".7" fill="#fbc887"/><rect x="3" y="4.5" width="10" height="7.6" fill="#a9acb0"/><path d="M3.6 5.6 H13 M3.6 7.6 H13 M3.6 9.6 H13 M3.6 11.4 H13" stroke="#fff" stroke-width="1" stroke-dasharray="1 1"/><rect x="5" y="8" width="3" height="3" fill="#6aa81a"/><rect x="9" y="6" width="3" height="3" fill="#76b222"/><rect x="6" y="9" width="1" height="1" fill="#b5dc6a"/><rect x="10" y="7" width="1" height="1" fill="#b5dc6a"/><path d="M10.6 15 H15.7 V9.9 Z" fill="#c9ced6"/><path d="M10.6 15 Q11.2 10.8 15.7 9.9 V11 Q12.4 11.6 12 15 Z" fill="#8a94a2"/><path d="M12.4 15 Q12.6 12.2 15.7 11.6 V15 Z" fill="#eef1f5"/></svg>
<svg style="left:85.3px;top:595.4px" width="6" height="10" viewBox="0 0 6 10"><path d="M1 1.1 L4.7 5 L1 8.9" fill="none" stroke="#a6a6a6" stroke-width="1.6"/></svg>
<span class="t " style="left:103.74px;top:613px;font-size:13px;color:#000;letter-spacing:-0.777px;">VAT</span>
<svg style="left:82px;top:614px" width="16" height="16" viewBox="0 0 16 16"><path d="M1.5 2 Q1.5 1 2.5 1 H6 Q7 1 7 2 V15 H1.5 Z" fill="url(#gBinG)" stroke="#9a9a9a" stroke-width=".8"/><path d="M3 4.4 H5.4 M3 6.6 H5.4 M3 8.8 H5.4" stroke="#9a9a9a" stroke-width=".8"/><circle cx="4.2" cy="12" r="1" fill="#fff" stroke="#8a8a8a" stroke-width=".6"/><path d="M7.4 3.4 Q7.4 2 8.6 1.4 L9.4 .5 H12.2 L13 1.4 Q14.2 2 14.2 3.4 V14 Q14.2 15.6 12.6 15.6 H9 Q7.4 15.6 7.4 14 Z" fill="url(#gBinB)" stroke="#234a8e" stroke-width=".7"/><rect x="9.2" y=".6" width="3.2" height="2.6" fill="#e9eef7"/><rect x="9" y="6.4" width="3.6" height="2.6" fill="#dbe6f6"/><circle cx="10.8" cy="12.4" r="1.1" fill="#c9d9f0" stroke="#1e3f7c" stroke-width=".5"/></svg>
<svg style="left:67.3px;top:617.4px" width="6" height="10" viewBox="0 0 6 10"><path d="M1 1.1 L4.7 5 L1 8.9" fill="none" stroke="#a6a6a6" stroke-width="1.6"/></svg>
<span class="t " style="left:103.74px;top:635px;font-size:13px;color:#000;letter-spacing:-0.032px;">Księgi rachunkowe</span>
<svg style="left:82px;top:636px" width="16" height="16" viewBox="0 0 16 16"><path d="M1.5 2 Q1.5 1 2.5 1 H6 Q7 1 7 2 V15 H1.5 Z" fill="url(#gBinG)" stroke="#9a9a9a" stroke-width=".8"/><path d="M3 4.4 H5.4 M3 6.6 H5.4 M3 8.8 H5.4" stroke="#9a9a9a" stroke-width=".8"/><circle cx="4.2" cy="12" r="1" fill="#fff" stroke="#8a8a8a" stroke-width=".6"/><path d="M7.4 3.4 Q7.4 2 8.6 1.4 L9.4 .5 H12.2 L13 1.4 Q14.2 2 14.2 3.4 V14 Q14.2 15.6 12.6 15.6 H9 Q7.4 15.6 7.4 14 Z" fill="url(#gBinB)" stroke="#234a8e" stroke-width=".7"/><rect x="9.2" y=".6" width="3.2" height="2.6" fill="#e9eef7"/><rect x="9" y="6.4" width="3.6" height="2.6" fill="#dbe6f6"/><circle cx="10.8" cy="12.4" r="1.1" fill="#c9d9f0" stroke="#1e3f7c" stroke-width=".5"/></svg>
<svg style="left:67.3px;top:639.4px" width="6" height="10" viewBox="0 0 6 10"><path d="M1 1.1 L4.7 5 L1 8.9" fill="none" stroke="#a6a6a6" stroke-width="1.6"/></svg>
<div class="r" style="left:386px;top:192px;width:767px;height:467px;background:#fff;box-sizing:border-box;border:1px solid #ececec;"></div>
<div class="r" style="left:791px;top:193px;width:1px;height:23px;background:#e5e5e5;"></div>
<div class="r" style="left:931px;top:193px;width:1px;height:23px;background:#e5e5e5;"></div>
<div class="r" style="left:1081px;top:193px;width:1px;height:23px;background:#e5e5e5;"></div>
<span class="t " style="left:393.5px;top:196px;font-size:13px;color:#000;letter-spacing:-0.243px;">Opis</span>
<span class="t " style="left:798px;top:196px;font-size:13px;color:#000;letter-spacing:-0.069px;">Symbol</span>
<span class="t " style="left:974.6px;top:196px;font-size:13px;color:#000;letter-spacing:-0.013px;">Utworzony</span>
<span class="t " style="left:1088.4px;top:196px;font-size:13px;color:#000;letter-spacing:-0.168px;">Okres</span>
<svg style="left:1043px;top:203px" width="8" height="5" viewBox="0 0 8 5"><path d="M.5 .5 L4 4 L7.5 .5" fill="none" stroke="#9a9a9a" stroke-width="1"/></svg>
<div class="r vdot" style="left:791px;top:216px;height:331px;"></div>
<div class="r vdot" style="left:931px;top:216px;height:331px;"></div>
<div class="r vdot" style="left:1081px;top:216px;height:331px;"></div>
<div class="r" style="left:387px;top:216px;width:765px;height:21px;background:#a6d6ff;box-sizing:border-box;border:1px solid #7ac1ff;"></div>
<div class="r dot" style="left:388px;top:237px;width:764px;"></div>
<span class="t " style="left:413px;top:218px;font-size:13px;color:#000;letter-spacing:-0.127px;">VAT-7 za miesiąc 8/2017</span>
<svg style="left:393px;top:219px" width="14" height="16" viewBox="0 0 14 16"><path d="M.5 .5 H8.5 L12.5 4.5 V15.5 H.5 Z" fill="#ffffff" stroke="#9db4d0" stroke-width="1"/><path d="M9 1 L12.5 4.5 V15.5 H1" fill="none" stroke="#5f7898" stroke-width="1"/><path d="M8.6 1 V4.4 H12 Z" fill="#e9eef5"/><path d="M2 2.5 H5" stroke="#4d5d78" stroke-width="1"/><path d="M2 3.6 H5 M7 4 H8.8" stroke="#b8bec8" stroke-width=".8"/><path d="M2 5 H5.8 M7 5 H10.2" stroke="#9fb3cf" stroke-width=".9"/><rect x="2" y="7" width="8.6" height="4" fill="#8ea6c9"/><rect x="3" y="8" width="1.6" height="2" fill="#fff"/><rect x="5.6" y="8" width="1.6" height="2" fill="#fff"/><rect x="8.3" y="8" width="1.3" height="2" fill="#fff"/><path d="M2 12.5 H6" stroke="#a8b8d0" stroke-width="1"/><path d="M6 12.5 H10.6" stroke="#e4e6ea" stroke-width="1"/></svg>
<span class="t " style="left:800.3px;top:218px;font-size:13px;color:#000;letter-spacing:-0.364px;">VAT-7(17)</span>
<span class="t " style="left:949px;top:218px;font-size:13px;color:#000;letter-spacing:-0.206px;">2017-09-28 22:53:33</span>
<span class="t " style="left:1090px;top:218px;font-size:13px;color:#000;letter-spacing:-0.218px;">2017-08</span>
<div class="r dot" style="left:388px;top:259px;width:764px;"></div>
<span class="t " style="left:413px;top:240px;font-size:13px;color:#000;letter-spacing:-0.157px;">VAT-R z 2017-04-06</span>
<svg style="left:393px;top:241px" width="14" height="16" viewBox="0 0 14 16"><path d="M.5 .5 H8.5 L12.5 4.5 V15.5 H.5 Z" fill="#ffffff" stroke="#9db4d0" stroke-width="1"/><path d="M9 1 L12.5 4.5 V15.5 H1" fill="none" stroke="#5f7898" stroke-width="1"/><path d="M8.6 1 V4.4 H12 Z" fill="#e9eef5"/><path d="M2 2.5 H5" stroke="#4d5d78" stroke-width="1"/><path d="M2 3.6 H5 M7 4 H8.8" stroke="#b8bec8" stroke-width=".8"/><path d="M2 5 H5.8 M7 5 H10.2" stroke="#9fb3cf" stroke-width=".9"/><rect x="2" y="7" width="8.6" height="4" fill="#8ea6c9"/><rect x="3" y="8" width="1.6" height="2" fill="#fff"/><rect x="5.6" y="8" width="1.6" height="2" fill="#fff"/><rect x="8.3" y="8" width="1.3" height="2" fill="#fff"/><path d="M2 12.5 H6" stroke="#a8b8d0" stroke-width="1"/><path d="M6 12.5 H10.6" stroke="#e4e6ea" stroke-width="1"/></svg>
<span class="t " style="left:800.3px;top:240px;font-size:13px;color:#000;letter-spacing:-0.546px;">VAT-R(13)</span>
<span class="t " style="left:949px;top:240px;font-size:13px;color:#000;letter-spacing:-0.153px;">2017-04-06 11:02:13</span>
<span class="t " style="left:1090px;top:240px;font-size:13px;color:#000;letter-spacing:-0.218px;">2017-04</span>
<div class="r dot" style="left:388px;top:281px;width:764px;"></div>
<span class="t " style="left:413px;top:262px;font-size:13px;color:#000;letter-spacing:0.001px;">Podatkowa Księga Przychodów i Rozchodów za rok 2016 - Ko...</span>
<svg style="left:393px;top:263px" width="14" height="16" viewBox="0 0 14 16"><path d="M.5 .5 H8.5 L12.5 4.5 V15.5 H.5 Z" fill="#ffffff" stroke="#9db4d0" stroke-width="1"/><path d="M9 1 L12.5 4.5 V15.5 H1" fill="none" stroke="#5f7898" stroke-width="1"/><path d="M8.6 1 V4.4 H12 Z" fill="#e9eef5"/><path d="M2 2.5 H5" stroke="#4d5d78" stroke-width="1"/><path d="M2 3.6 H5 M7 4 H8.8" stroke="#b8bec8" stroke-width=".8"/><path d="M2 5 H5.8 M7 5 H10.2" stroke="#9fb3cf" stroke-width=".9"/><rect x="2" y="7" width="8.6" height="4" fill="#8ea6c9"/><rect x="3" y="8" width="1.6" height="2" fill="#fff"/><rect x="5.6" y="8" width="1.6" height="2" fill="#fff"/><rect x="8.3" y="8" width="1.3" height="2" fill="#fff"/><path d="M2 12.5 H6" stroke="#a8b8d0" stroke-width="1"/><path d="M6 12.5 H10.6" stroke="#e4e6ea" stroke-width="1"/></svg>
<span class="t " style="left:800.3px;top:262px;font-size:13px;color:#000;letter-spacing:-0.968px;">PKPiR(1)</span>
<span class="t " style="left:949px;top:262px;font-size:13px;color:#000;letter-spacing:-0.206px;">2017-04-04 20:24:45</span>
<span class="t " style="left:1090px;top:262px;font-size:13px;color:#000;letter-spacing:-0.218px;">2017-04</span>
<div class="r dot" style="left:388px;top:303px;width:764px;"></div>
<span class="t " style="left:413px;top:284px;font-size:13px;color:#000;letter-spacing:-0.129px;">Rejestry VAT za 3-12/2016 - Kowalski Sp. J.</span>
<svg style="left:393px;top:285px" width="14" height="16" viewBox="0 0 14 16"><path d="M.5 .5 H8.5 L12.5 4.5 V15.5 H.5 Z" fill="#ffffff" stroke="#9db4d0" stroke-width="1"/><path d="M9 1 L12.5 4.5 V15.5 H1" fill="none" stroke="#5f7898" stroke-width="1"/><path d="M8.6 1 V4.4 H12 Z" fill="#e9eef5"/><path d="M2 2.5 H5" stroke="#4d5d78" stroke-width="1"/><path d="M2 3.6 H5 M7 4 H8.8" stroke="#b8bec8" stroke-width=".8"/><path d="M2 5 H5.8 M7 5 H10.2" stroke="#9fb3cf" stroke-width=".9"/><rect x="2" y="7" width="8.6" height="4" fill="#8ea6c9"/><rect x="3" y="8" width="1.6" height="2" fill="#fff"/><rect x="5.6" y="8" width="1.6" height="2" fill="#fff"/><rect x="8.3" y="8" width="1.3" height="2" fill="#fff"/><path d="M2 12.5 H6" stroke="#a8b8d0" stroke-width="1"/><path d="M6 12.5 H10.6" stroke="#e4e6ea" stroke-width="1"/></svg>
<span class="t " style="left:800.3px;top:284px;font-size:13px;color:#000;letter-spacing:-0.395px;">Rejestry VAT(1)</span>
<span class="t " style="left:949px;top:284px;font-size:13px;color:#000;letter-spacing:-0.206px;">2017-04-04 20:24:02</span>
<span class="t " style="left:1090px;top:284px;font-size:13px;color:#000;letter-spacing:-0.218px;">2017-04</span>
<div class="r dot" style="left:388px;top:325px;width:764px;"></div>
<span class="t " style="left:413px;top:306px;font-size:13px;color:#000;letter-spacing:-0.188px;">VAT-UE za miesiąc 2/2017</span>
<svg style="left:393px;top:307px" width="14" height="16" viewBox="0 0 14 16"><path d="M.5 .5 H8.5 L12.5 4.5 V15.5 H.5 Z" fill="#ffffff" stroke="#9db4d0" stroke-width="1"/><path d="M9 1 L12.5 4.5 V15.5 H1" fill="none" stroke="#5f7898" stroke-width="1"/><path d="M8.6 1 V4.4 H12 Z" fill="#e9eef5"/><path d="M2 2.5 H5" stroke="#4d5d78" stroke-width="1"/><path d="M2 3.6 H5 M7 4 H8.8" stroke="#b8bec8" stroke-width=".8"/><path d="M2 5 H5.8 M7 5 H10.2" stroke="#9fb3cf" stroke-width=".9"/><rect x="2" y="7" width="8.6" height="4" fill="#8ea6c9"/><rect x="3" y="8" width="1.6" height="2" fill="#fff"/><rect x="5.6" y="8" width="1.6" height="2" fill="#fff"/><rect x="8.3" y="8" width="1.3" height="2" fill="#fff"/><path d="M2 12.5 H6" stroke="#a8b8d0" stroke-width="1"/><path d="M6 12.5 H10.6" stroke="#e4e6ea" stroke-width="1"/></svg>
<span class="t " style="left:800.3px;top:306px;font-size:13px;color:#000;letter-spacing:-0.589px;">VAT-UE(4)</span>
<span class="t " style="left:949px;top:306px;font-size:13px;color:#000;letter-spacing:-0.153px;">2017-03-25 13:11:20</span>
<span class="t " style="left:1090px;top:306px;font-size:13px;color:#000;letter-spacing:-0.218px;">2017-03</span>
<div class="r dot" style="left:388px;top:347px;width:764px;"></div>
<span class="t " style="left:413px;top:328px;font-size:13px;color:#000;letter-spacing:-0.616px;">VAT-UEK</span>
<svg style="left:393px;top:329px" width="14" height="16" viewBox="0 0 14 16"><path d="M.5 .5 H8.5 L12.5 4.5 V15.5 H.5 Z" fill="#ffffff" stroke="#9db4d0" stroke-width="1"/><path d="M9 1 L12.5 4.5 V15.5 H1" fill="none" stroke="#5f7898" stroke-width="1"/><path d="M8.6 1 V4.4 H12 Z" fill="#e9eef5"/><path d="M2 2.5 H5" stroke="#4d5d78" stroke-width="1"/><path d="M2 3.6 H5 M7 4 H8.8" stroke="#b8bec8" stroke-width=".8"/><path d="M2 5 H5.8 M7 5 H10.2" stroke="#9fb3cf" stroke-width=".9"/><rect x="2" y="7" width="8.6" height="4" fill="#8ea6c9"/><rect x="3" y="8" width="1.6" height="2" fill="#fff"/><rect x="5.6" y="8" width="1.6" height="2" fill="#fff"/><rect x="8.3" y="8" width="1.3" height="2" fill="#fff"/><path d="M2 12.5 H6" stroke="#a8b8d0" stroke-width="1"/><path d="M6 12.5 H10.6" stroke="#e4e6ea" stroke-width="1"/></svg>
<span class="t " style="left:800.3px;top:328px;font-size:13px;color:#000;letter-spacing:-0.587px;">VAT-UEK(4)</span>
<span class="t " style="left:949px;top:328px;font-size:13px;color:#000;letter-spacing:-0.206px;">2017-03-25 12:49:29</span>
<span class="t " style="left:1090px;top:328px;font-size:13px;color:#000;letter-spacing:-0.218px;">2017-03</span>
<div class="r dot" style="left:388px;top:369px;width:764px;"></div>
<span class="t " style="left:413px;top:350px;font-size:13px;color:#000;letter-spacing:-0.725px;">VAT-UE</span>
<svg style="left:393px;top:351px" width="14" height="16" viewBox="0 0 14 16"><path d="M.5 .5 H8.5 L12.5 4.5 V15.5 H.5 Z" fill="#ffffff" stroke="#9db4d0" stroke-width="1"/><path d="M9 1 L12.5 4.5 V15.5 H1" fill="none" stroke="#5f7898" stroke-width="1"/><path d="M8.6 1 V4.4 H12 Z" fill="#e9eef5"/><path d="M2 2.5 H5" stroke="#4d5d78" stroke-width="1"/><path d="M2 3.6 H5 M7 4 H8.8" stroke="#b8bec8" stroke-width=".8"/><path d="M2 5 H5.8 M7 5 H10.2" stroke="#9fb3cf" stroke-width=".9"/><rect x="2" y="7" width="8.6" height="4" fill="#8ea6c9"/><rect x="3" y="8" width="1.6" height="2" fill="#fff"/><rect x="5.6" y="8" width="1.6" height="2" fill="#fff"/><rect x="8.3" y="8" width="1.3" height="2" fill="#fff"/><path d="M2 12.5 H6" stroke="#a8b8d0" stroke-width="1"/><path d="M6 12.5 H10.6" stroke="#e4e6ea" stroke-width="1"/></svg>
<span class="t " style="left:800.3px;top:350px;font-size:13px;color:#000;letter-spacing:-0.589px;">VAT-UE(4)</span>
<span class="t " style="left:949px;top:350px;font-size:13px;color:#000;letter-spacing:-0.206px;">2017-03-25 00:21:58</span>
<span class="t " style="left:1090px;top:350px;font-size:13px;color:#000;letter-spacing:-0.218px;">2017-03</span>
<div class="r dot" style="left:388px;top:391px;width:764px;"></div>
<span class="t " style="left:413px;top:372px;font-size:13px;color:#000;letter-spacing:0.027px;">Podatkowa księga przychodów i rozchodów - Kowalski Sp. J.</span>
<svg style="left:393px;top:373px" width="14" height="16" viewBox="0 0 14 16"><path d="M.5 .5 H8.5 L12.5 4.5 V15.5 H.5 Z" fill="#ffffff" stroke="#9db4d0" stroke-width="1"/><path d="M9 1 L12.5 4.5 V15.5 H1" fill="none" stroke="#5f7898" stroke-width="1"/><path d="M8.6 1 V4.4 H12 Z" fill="#e9eef5"/><path d="M2 2.5 H5" stroke="#4d5d78" stroke-width="1"/><path d="M2 3.6 H5 M7 4 H8.8" stroke="#b8bec8" stroke-width=".8"/><path d="M2 5 H5.8 M7 5 H10.2" stroke="#9fb3cf" stroke-width=".9"/><rect x="2" y="7" width="8.6" height="4" fill="#8ea6c9"/><rect x="3" y="8" width="1.6" height="2" fill="#fff"/><rect x="5.6" y="8" width="1.6" height="2" fill="#fff"/><rect x="8.3" y="8" width="1.3" height="2" fill="#fff"/><path d="M2 12.5 H6" stroke="#a8b8d0" stroke-width="1"/><path d="M6 12.5 H10.6" stroke="#e4e6ea" stroke-width="1"/></svg>
<span class="t " style="left:800.3px;top:372px;font-size:13px;color:#000;letter-spacing:-0.968px;">PKPiR(1)</span>
<span class="t " style="left:949px;top:372px;font-size:13px;color:#000;letter-spacing:-0.153px;">2017-03-22 16:11:45</span>
<span class="t " style="left:1090px;top:372px;font-size:13px;color:#000;letter-spacing:-0.218px;">2017-03</span>
<div class="r dot" style="left:388px;top:413px;width:764px;"></div>
<span class="t " style="left:413px;top:394px;font-size:13px;color:#000;letter-spacing:-0.098px;">Rachunek zysków i strat na dzień 2016-12-31</span>
<svg style="left:393px;top:395px" width="14" height="16" viewBox="0 0 14 16"><path d="M.5 .5 H8.5 L12.5 4.5 V15.5 H.5 Z" fill="#ffffff" stroke="#9db4d0" stroke-width="1"/><path d="M9 1 L12.5 4.5 V15.5 H1" fill="none" stroke="#5f7898" stroke-width="1"/><path d="M8.6 1 V4.4 H12 Z" fill="#e9eef5"/><path d="M2 2.5 H5" stroke="#4d5d78" stroke-width="1"/><path d="M2 3.6 H5 M7 4 H8.8" stroke="#b8bec8" stroke-width=".8"/><path d="M2 5 H5.8 M7 5 H10.2" stroke="#9fb3cf" stroke-width=".9"/><rect x="2" y="7" width="8.6" height="4" fill="#8ea6c9"/><rect x="3" y="8" width="1.6" height="2" fill="#fff"/><rect x="5.6" y="8" width="1.6" height="2" fill="#fff"/><rect x="8.3" y="8" width="1.3" height="2" fill="#fff"/><path d="M2 12.5 H6" stroke="#a8b8d0" stroke-width="1"/><path d="M6 12.5 H10.6" stroke="#e4e6ea" stroke-width="1"/></svg>
<span class="t " style="left:800.3px;top:394px;font-size:13px;color:#000;letter-spacing:-0.329px;">Rachunek zysków i s...</span>
<span class="t " style="left:949px;top:394px;font-size:13px;color:#000;letter-spacing:-0.206px;">2017-03-13 20:13:44</span>
<span class="t " style="left:1090px;top:394px;font-size:13px;color:#000;letter-spacing:-0.218px;">2017-03</span>
<div class="r dot" style="left:388px;top:435px;width:764px;"></div>
<span class="t " style="left:413px;top:416px;font-size:13px;color:#000;letter-spacing:-0.326px;">UPL-1 dla</span>
<svg style="left:393px;top:417px" width="14" height="16" viewBox="0 0 14 16"><path d="M.5 .5 H8.5 L12.5 4.5 V15.5 H.5 Z" fill="#ffffff" stroke="#9db4d0" stroke-width="1"/><path d="M9 1 L12.5 4.5 V15.5 H1" fill="none" stroke="#5f7898" stroke-width="1"/><path d="M8.6 1 V4.4 H12 Z" fill="#e9eef5"/><path d="M2 2.5 H5" stroke="#4d5d78" stroke-width="1"/><path d="M2 3.6 H5 M7 4 H8.8" stroke="#b8bec8" stroke-width=".8"/><path d="M2 5 H5.8 M7 5 H10.2" stroke="#9fb3cf" stroke-width=".9"/><rect x="2" y="7" width="8.6" height="4" fill="#8ea6c9"/><rect x="3" y="8" width="1.6" height="2" fill="#fff"/><rect x="5.6" y="8" width="1.6" height="2" fill="#fff"/><rect x="8.3" y="8" width="1.3" height="2" fill="#fff"/><path d="M2 12.5 H6" stroke="#a8b8d0" stroke-width="1"/><path d="M6 12.5 H10.6" stroke="#e4e6ea" stroke-width="1"/></svg>
<span class="t " style="left:800.3px;top:416px;font-size:13px;color:#000;letter-spacing:-0.662px;">UPL-1(6)</span>
<span class="t " style="left:949px;top:416px;font-size:13px;color:#000;letter-spacing:-0.153px;">2017-03-11 20:03:43</span>
<span class="t " style="left:1090px;top:416px;font-size:13px;color:#000;letter-spacing:-0.218px;">2017-03</span>
<div class="r dot" style="left:388px;top:457px;width:764px;"></div>
<span class="t " style="left:413px;top:438px;font-size:13px;color:#000;letter-spacing:-0.157px;">VAT-R z 2017-02-26</span>
<svg style="left:393px;top:439px" width="14" height="16" viewBox="0 0 14 16"><path d="M.5 .5 H8.5 L12.5 4.5 V15.5 H.5 Z" fill="#ffffff" stroke="#9db4d0" stroke-width="1"/><path d="M9 1 L12.5 4.5 V15.5 H1" fill="none" stroke="#5f7898" stroke-width="1"/><path d="M8.6 1 V4.4 H12 Z" fill="#e9eef5"/><path d="M2 2.5 H5" stroke="#4d5d78" stroke-width="1"/><path d="M2 3.6 H5 M7 4 H8.8" stroke="#b8bec8" stroke-width=".8"/><path d="M2 5 H5.8 M7 5 H10.2" stroke="#9fb3cf" stroke-width=".9"/><rect x="2" y="7" width="8.6" height="4" fill="#8ea6c9"/><rect x="3" y="8" width="1.6" height="2" fill="#fff"/><rect x="5.6" y="8" width="1.6" height="2" fill="#fff"/><rect x="8.3" y="8" width="1.3" height="2" fill="#fff"/><path d="M2 12.5 H6" stroke="#a8b8d0" stroke-width="1"/><path d="M6 12.5 H10.6" stroke="#e4e6ea" stroke-width="1"/></svg>
<span class="t " style="left:800.3px;top:438px;font-size:13px;color:#000;letter-spacing:-0.546px;">VAT-R(13)</span>
<span class="t " style="left:949px;top:438px;font-size:13px;color:#000;letter-spacing:-0.153px;">2017-02-26 11:06:30</span>
<span class="t " style="left:1090px;top:438px;font-size:13px;color:#000;letter-spacing:-0.218px;">2017-02</span>
<div class="r dot" style="left:388px;top:479px;width:764px;"></div>
<span class="t " style="left:413px;top:460px;font-size:13px;color:#000;letter-spacing:-0.405px;">VAT-27</span>
<svg style="left:393px;top:461px" width="14" height="16" viewBox="0 0 14 16"><path d="M.5 .5 H8.5 L12.5 4.5 V15.5 H.5 Z" fill="#ffffff" stroke="#9db4d0" stroke-width="1"/><path d="M9 1 L12.5 4.5 V15.5 H1" fill="none" stroke="#5f7898" stroke-width="1"/><path d="M8.6 1 V4.4 H12 Z" fill="#e9eef5"/><path d="M2 2.5 H5" stroke="#4d5d78" stroke-width="1"/><path d="M2 3.6 H5 M7 4 H8.8" stroke="#b8bec8" stroke-width=".8"/><path d="M2 5 H5.8 M7 5 H10.2" stroke="#9fb3cf" stroke-width=".9"/><rect x="2" y="7" width="8.6" height="4" fill="#8ea6c9"/><rect x="3" y="8" width="1.6" height="2" fill="#fff"/><rect x="5.6" y="8" width="1.6" height="2" fill="#fff"/><rect x="8.3" y="8" width="1.3" height="2" fill="#fff"/><path d="M2 12.5 H6" stroke="#a8b8d0" stroke-width="1"/><path d="M6 12.5 H10.6" stroke="#e4e6ea" stroke-width="1"/></svg>
<span class="t " style="left:800.3px;top:460px;font-size:13px;color:#000;letter-spacing:-0.174px;">VAT-27(2)(od 2017)</span>
<span class="t " style="left:949px;top:460px;font-size:13px;color:#000;letter-spacing:-0.206px;">2017-02-26 09:52:09</span>
<span class="t " style="left:1090px;top:460px;font-size:13px;color:#000;letter-spacing:-0.218px;">2017-12</span>
<div class="r dot" style="left:388px;top:501px;width:764px;"></div>
<span class="t " style="left:413px;top:482px;font-size:13px;color:#000;letter-spacing:-0.330px;">JPK VAT za 01/2017</span>
<svg style="left:393px;top:483px" width="14" height="16" viewBox="0 0 14 16"><path d="M.5 .5 H8.5 L12.5 4.5 V15.5 H.5 Z" fill="#ffffff" stroke="#9db4d0" stroke-width="1"/><path d="M9 1 L12.5 4.5 V15.5 H1" fill="none" stroke="#5f7898" stroke-width="1"/><path d="M8.6 1 V4.4 H12 Z" fill="#e9eef5"/><path d="M2 2.5 H5" stroke="#4d5d78" stroke-width="1"/><path d="M2 3.6 H5 M7 4 H8.8" stroke="#b8bec8" stroke-width=".8"/><path d="M2 5 H5.8 M7 5 H10.2" stroke="#9fb3cf" stroke-width=".9"/><rect x="2" y="7" width="8.6" height="4" fill="#8ea6c9"/><rect x="3" y="8" width="1.6" height="2" fill="#fff"/><rect x="5.6" y="8" width="1.6" height="2" fill="#fff"/><rect x="8.3" y="8" width="1.3" height="2" fill="#fff"/><path d="M2 12.5 H6" stroke="#a8b8d0" stroke-width="1"/><path d="M6 12.5 H10.6" stroke="#e4e6ea" stroke-width="1"/></svg>
<span class="t " style="left:800.3px;top:482px;font-size:13px;color:#000;letter-spacing:-1.124px;">JPK_VAT(2)</span>
<span class="t " style="left:949px;top:482px;font-size:13px;color:#000;letter-spacing:-0.206px;">2017-02-07 09:38:14</span>
<span class="t " style="left:1090px;top:482px;font-size:13px;color:#000;letter-spacing:-0.218px;">2017-01</span>
<div class="r dot" style="left:388px;top:523px;width:764px;"></div>
<span class="t " style="left:413px;top:504px;font-size:13px;color:#000;letter-spacing:-0.074px;">CIT-8 za 2017-01-01 - 2017-01-31</span>
<svg style="left:393px;top:505px" width="14" height="16" viewBox="0 0 14 16"><path d="M.5 .5 H8.5 L12.5 4.5 V15.5 H.5 Z" fill="#ffffff" stroke="#9db4d0" stroke-width="1"/><path d="M9 1 L12.5 4.5 V15.5 H1" fill="none" stroke="#5f7898" stroke-width="1"/><path d="M8.6 1 V4.4 H12 Z" fill="#e9eef5"/><path d="M2 2.5 H5" stroke="#4d5d78" stroke-width="1"/><path d="M2 3.6 H5 M7 4 H8.8" stroke="#b8bec8" stroke-width=".8"/><path d="M2 5 H5.8 M7 5 H10.2" stroke="#9fb3cf" stroke-width=".9"/><rect x="2" y="7" width="8.6" height="4" fill="#8ea6c9"/><rect x="3" y="8" width="1.6" height="2" fill="#fff"/><rect x="5.6" y="8" width="1.6" height="2" fill="#fff"/><rect x="8.3" y="8" width="1.3" height="2" fill="#fff"/><path d="M2 12.5 H6" stroke="#a8b8d0" stroke-width="1"/><path d="M6 12.5 H10.6" stroke="#e4e6ea" stroke-width="1"/></svg>
<span class="t " style="left:800.3px;top:504px;font-size:13px;color:#000;letter-spacing:-0.425px;">CIT-8(24)</span>
<span class="t " style="left:949px;top:504px;font-size:13px;color:#000;letter-spacing:-0.206px;">2017-01-31 21:20:31</span>
<span class="t " style="left:1090px;top:504px;font-size:13px;color:#000;letter-spacing:-0.218px;">2017-01</span>
<div class="r dot" style="left:388px;top:545px;width:764px;"></div>
<span class="t " style="left:413px;top:526px;font-size:13px;color:#000;letter-spacing:-0.274px;">JPK VAT za 11/2016</span>
<svg style="left:393px;top:527px" width="14" height="16" viewBox="0 0 14 16"><path d="M.5 .5 H8.5 L12.5 4.5 V15.5 H.5 Z" fill="#ffffff" stroke="#9db4d0" stroke-width="1"/><path d="M9 1 L12.5 4.5 V15.5 H1" fill="none" stroke="#5f7898" stroke-width="1"/><path d="M8.6 1 V4.4 H12 Z" fill="#e9eef5"/><path d="M2 2.5 H5" stroke="#4d5d78" stroke-width="1"/><path d="M2 3.6 H5 M7 4 H8.8" stroke="#b8bec8" stroke-width=".8"/><path d="M2 5 H5.8 M7 5 H10.2" stroke="#9fb3cf" stroke-width=".9"/><rect x="2" y="7" width="8.6" height="4" fill="#8ea6c9"/><rect x="3" y="8" width="1.6" height="2" fill="#fff"/><rect x="5.6" y="8" width="1.6" height="2" fill="#fff"/><rect x="8.3" y="8" width="1.3" height="2" fill="#fff"/><path d="M2 12.5 H6" stroke="#a8b8d0" stroke-width="1"/><path d="M6 12.5 H10.6" stroke="#e4e6ea" stroke-width="1"/></svg>
<span class="t " style="left:800.3px;top:526px;font-size:13px;color:#000;letter-spacing:-1.124px;">JPK_VAT(1)</span>
<span class="t " style="left:949px;top:526px;font-size:13px;color:#000;letter-spacing:-0.206px;">2017-01-02 17:43:08</span>
<span class="t " style="left:1090px;top:526px;font-size:13px;color:#000;letter-spacing:-0.057px;">2016-11</span>
<div class="r" style="left:387px;top:642px;width:765px;height:17px;background:#f0f0f0;"></div>
<div class="r" style="left:404px;top:642px;width:379px;height:15px;background:#cdcdcd;"></div>
<svg style="left:391px;top:645.5px" width="7" height="8" viewBox="0 0 7 8"><path d="M5.3 .7 L2 4 L5.3 7.3" fill="none" stroke="#505050" stroke-width="2"/></svg>
<svg style="left:1141px;top:645.5px" width="7" height="8" viewBox="0 0 7 8"><path d="M1.3 .7 L4.6 4 L1.3 7.3" fill="none" stroke="#505050" stroke-width="2"/></svg>
<span class="t " style="left:5.8px;top:662px;font-size:12px;color:#000;letter-spacing:-0.212px;">Obiektów: 15</span>
<span class="t " style="left:158.7px;top:662px;font-size:12px;color:#000;letter-spacing:-0.475px;">Licencja dla: NEONET CONSULTING S.C.</span>
<span class="t " style="left:380.3px;top:662px;font-size:12px;color:#0000ee;letter-spacing:-0.036px;text-decoration:underline;">taxmachine.pl</span>
<span class="t " style="left:464.3px;top:662px;font-size:12px;color:#000;letter-spacing:-0.657px;">2.2.1.2960</span>
<span class="t " style="left:551.6px;top:662px;font-size:12px;color:#000;letter-spacing:-0.728px;">Baza SQLite:</span>
<span class="t " style="left:619px;top:662px;font-size:12px;color:#008000;letter-spacing:-0.449px;">LocalDB.db</span>
<span class="t " style="left:686.5px;top:662px;font-size:12px;color:#008000;letter-spacing:-0.213px;text-decoration:underline;">Aktualizacje do 2019-02-01</span>
<div class="r" style="left:1151px;top:668px;width:2px;height:2px;background:#c4c4c4;"></div>
<div class="r" style="left:1147px;top:672px;width:2px;height:2px;background:#c4c4c4;"></div>
<div class="r" style="left:1151px;top:672px;width:2px;height:2px;background:#c4c4c4;"></div>
<div class="r" style="left:1143px;top:676px;width:2px;height:2px;background:#c4c4c4;"></div>
<div class="r" style="left:1147px;top:676px;width:2px;height:2px;background:#c4c4c4;"></div>
<div class="r" style="left:1151px;top:676px;width:2px;height:2px;background:#c4c4c4;"></div>
<div class="r" style="left:0px;top:0px;width:1159px;height:1px;background:#0078d7;"></div>
<div class="r" style="left:0px;top:0px;width:1px;height:684px;background:#0078d7;"></div>
<div class="r" style="left:1157px;top:0px;width:1px;height:684px;background:#0078d7;"></div>
<div class="r" style="left:0px;top:681px;width:1159px;height:2px;background:#0078d7;"></div>
<div class="r" style="left:1158px;top:0px;width:1px;height:684px;background:#0a1e3c;"></div>
<div class="r" style="left:0px;top:683px;width:1159px;height:1px;background:#0a1e3c;"></div>
</div>
</body></html>
